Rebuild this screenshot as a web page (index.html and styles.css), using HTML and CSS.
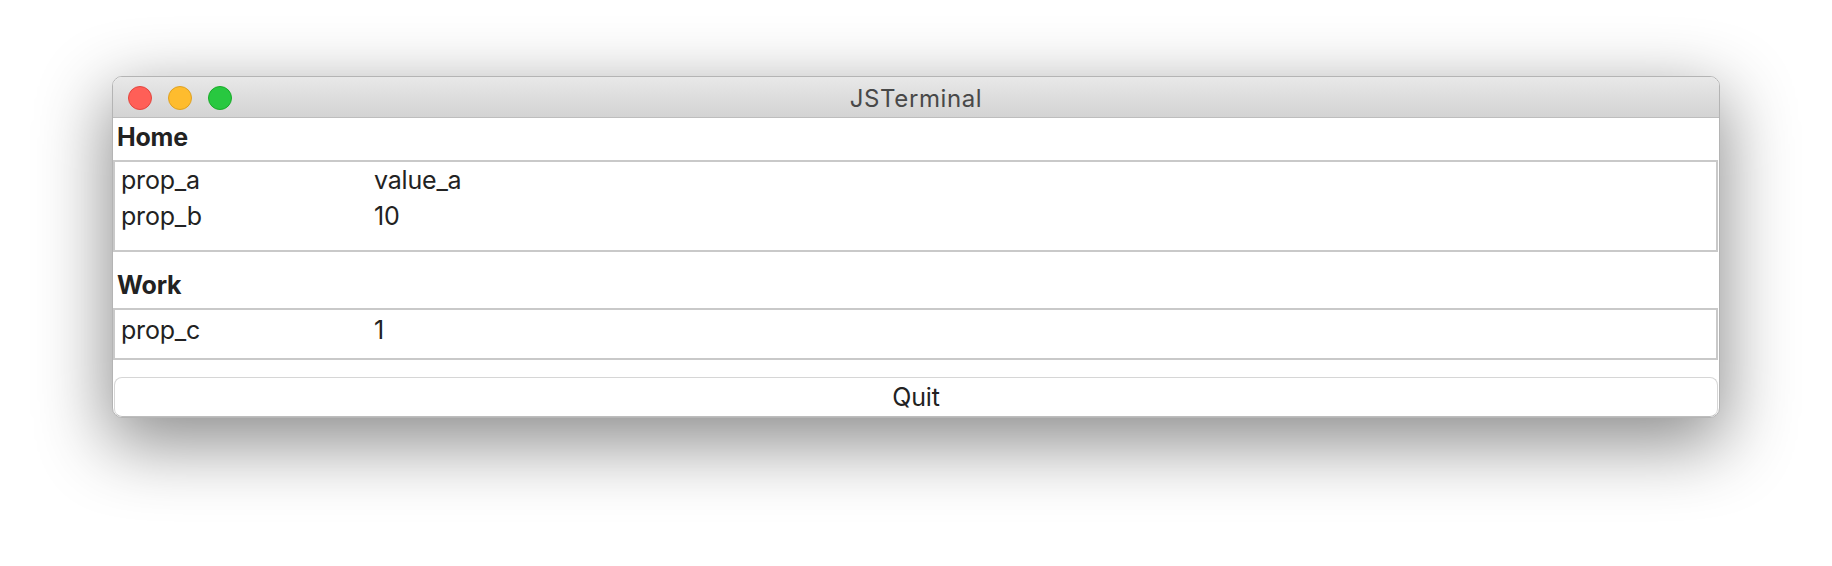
FILE: index.html
```html
<!DOCTYPE html>
<html>
<head>
<meta charset="utf-8">
<title>JSTerminal</title>
<link rel="stylesheet" href="styles.css">
</head>
<body>
<div class="desktop">
  <div class="window">
    <div class="titlebar">
      <div class="lights">
        <span class="light red"></span>
        <span class="light yellow"></span>
        <span class="light green"></span>
      </div>
      <div class="title">JSTerminal</div>
    </div>
    <div class="content">
      <div class="section-label first">Home</div>
      <div class="group home">
        <div class="row"><span class="key">prop_a</span><span class="val">value_a</span></div>
        <div class="row"><span class="key">prop_b</span><span class="val">10</span></div>
      </div>
      <div class="section-label">Work</div>
      <div class="group work">
        <div class="row"><span class="key">prop_c</span><span class="val">1</span></div>
      </div>
      <button class="quit">Quit</button>
    </div>
  </div>
</div>
</body>
</html>
```

FILE: styles.css
```css
html, body {
  margin: 0;
  padding: 0;
  background: #ffffff;
}
body {
  font-family: Inter, "Noto Sans", "Liberation Sans", sans-serif;
  color: #222222;
  min-height: 566px;
  overflow: hidden;
}
.desktop {
  padding: 76px 112px;
  min-height: 566px;
  box-sizing: border-box;
}
.window {
  display: flex;
  flex-direction: column;
  width: 1608px;
  box-sizing: border-box;
  border: 1px solid #b4b4b4;
  border-radius: 10px;
  overflow: hidden;
  background: #ffffff;
  box-shadow: 0 22px 70px 4px rgba(0, 0, 0, 0.45);
}
.titlebar {
  position: relative;
  height: 40px;
  border-bottom: 1px solid #bdbdbd;
  background: linear-gradient(#e8e8e8, #d3d3d3);
  display: flex;
  align-items: center;
  justify-content: center;
}
.lights {
  position: absolute;
  left: 15px;
  top: 9px;
  display: flex;
  gap: 16px;
}
.light {
  width: 22px;
  height: 22px;
  border-radius: 50%;
  display: block;
}
.red { background: #ff5f57; border: 1px solid #e2463f; }
.yellow { background: #febc2e; border: 1px solid #dea123; }
.green { background: #28c840; border: 1px solid #1aab29; }
.title {
  font-size: 24px;
  color: #484848;
  letter-spacing: 0.6px;
  padding-top: 3px;
}
.content {
  display: flex;
  flex-direction: column;
}
.section-label {
  font-weight: 700;
  font-size: 25px;
  line-height: 38px;
  padding: 0 0 4px 4px;
  margin-top: 14px;
  letter-spacing: -0.2px;
}
.section-label.first {
  margin-top: 0;
}
.group {
  border: 2px solid #c9c9c9;
  margin-right: 1px;
  padding: 0 6px;
  box-sizing: border-box;
}
.group.home {
  height: 92px;
  padding-top: 0;
}
.group.work {
  height: 52px;
  padding-top: 2px;
}
.row {
  display: flex;
  font-size: 25px;
  line-height: 36px;
  letter-spacing: -0.2px;
}
.key {
  width: 253px;
}
.quit {
  margin: 17px 1px 0 1px;
  height: 40px;
  border: 1px solid #d6d6d6;
  border-bottom-color: #bdbdbd;
  border-radius: 8px;
  background: #ffffff;
  font-family: Inter, "Noto Sans", "Liberation Sans", sans-serif;
  font-size: 25px;
  color: #222222;
  letter-spacing: -0.2px;
  padding: 0;
}
```
